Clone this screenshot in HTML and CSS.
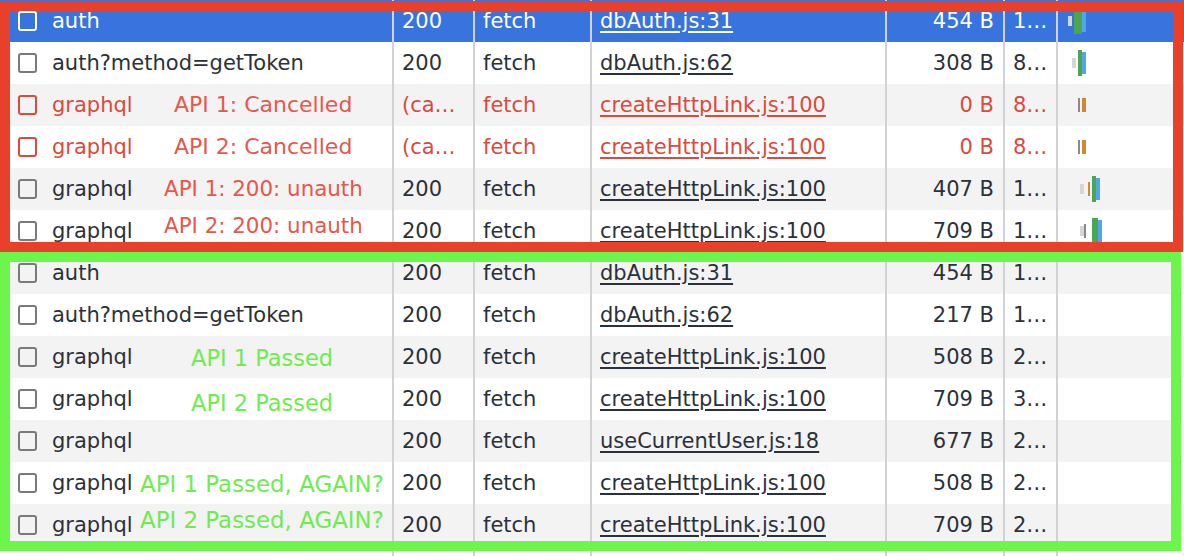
FILE: index.html
```html
<!DOCTYPE html>
<html lang="en">
<head>
    <meta charset="UTF-8">
    <title>Network - requests</title>
    <link rel="stylesheet" href="styles.css">
</head>
<body>
    <div class="shot">
        <div class="log">
            <div class="row selected">
                <div class="cell name"><span class="check"></span><span>auth</span></div>
                <div class="cell">200</div>
                <div class="cell">fetch</div>
                <div class="cell"><span class="link">dbAuth.js:31</span></div>
                <div class="cell size">454 B</div>
                <div class="cell time">1…</div>
                <div class="cell fall">
                    <span class="bar wait" style="left:10px;top:16px;width:4px;height:10px"></span>
                    <span class="bar green" style="left:16px;top:12px;width:8px;height:22px"></span>
                    <span class="bar blue" style="left:24px;top:12px;width:4px;height:20px"></span>
                </div>
            </div>
            <div class="row">
                <div class="cell name"><span class="check"></span><span>auth?method=getToken</span></div>
                <div class="cell">200</div>
                <div class="cell">fetch</div>
                <div class="cell"><span class="link">dbAuth.js:62</span></div>
                <div class="cell size">308 B</div>
                <div class="cell time">8…</div>
                <div class="cell fall">
                    <span class="bar wait" style="left:14px;top:16px;width:4px;height:10px"></span>
                    <span class="bar green" style="left:20px;top:8px;width:4px;height:26px"></span>
                    <span class="bar blue" style="left:24px;top:10px;width:4px;height:22px"></span>
                </div>
            </div>
            <div class="row error">
                <div class="cell name"><span class="check"></span><span>graphql</span></div>
                <div class="cell">(ca…</div>
                <div class="cell">fetch</div>
                <div class="cell"><span class="link">createHttpLink.js:100</span></div>
                <div class="cell size">0 B</div>
                <div class="cell time">8…</div>
                <div class="cell fall">
                    <span class="bar stall" style="left:20px;top:14px;width:2px;height:14px"></span>
                    <span class="bar orange" style="left:24px;top:14px;width:4px;height:14px"></span>
                </div>
            </div>
            <div class="row error">
                <div class="cell name"><span class="check"></span><span>graphql</span></div>
                <div class="cell">(ca…</div>
                <div class="cell">fetch</div>
                <div class="cell"><span class="link">createHttpLink.js:100</span></div>
                <div class="cell size">0 B</div>
                <div class="cell time">8…</div>
                <div class="cell fall">
                    <span class="bar stall" style="left:20px;top:14px;width:2px;height:14px"></span>
                    <span class="bar orange" style="left:24px;top:14px;width:4px;height:14px"></span>
                </div>
            </div>
            <div class="row">
                <div class="cell name"><span class="check"></span><span>graphql</span></div>
                <div class="cell">200</div>
                <div class="cell">fetch</div>
                <div class="cell"><span class="link">createHttpLink.js:100</span></div>
                <div class="cell size">407 B</div>
                <div class="cell time">1…</div>
                <div class="cell fall">
                    <span class="bar wait" style="left:22px;top:16px;width:4px;height:10px"></span>
                    <span class="bar orange" style="left:30px;top:14px;width:2px;height:14px"></span>
                    <span class="bar green" style="left:34px;top:8px;width:4px;height:26px"></span>
                    <span class="bar blue" style="left:38px;top:10px;width:4px;height:22px"></span>
                </div>
            </div>
            <div class="row">
                <div class="cell name"><span class="check"></span><span>graphql</span></div>
                <div class="cell">200</div>
                <div class="cell">fetch</div>
                <div class="cell"><span class="link">createHttpLink.js:100</span></div>
                <div class="cell size">709 B</div>
                <div class="cell time">1…</div>
                <div class="cell fall">
                    <span class="bar wait" style="left:22px;top:16px;width:4px;height:10px"></span>
                    <span class="bar stall" style="left:26px;top:14px;width:2px;height:14px"></span>
                    <span class="bar green" style="left:34px;top:8px;width:6px;height:26px"></span>
                    <span class="bar blue" style="left:40px;top:10px;width:4px;height:22px"></span>
                </div>
            </div>
            <div class="row">
                <div class="cell name"><span class="check"></span><span>auth</span></div>
                <div class="cell">200</div>
                <div class="cell">fetch</div>
                <div class="cell"><span class="link">dbAuth.js:31</span></div>
                <div class="cell size">454 B</div>
                <div class="cell time">1…</div>
                <div class="cell fall"></div>
            </div>
            <div class="row">
                <div class="cell name"><span class="check"></span><span>auth?method=getToken</span></div>
                <div class="cell">200</div>
                <div class="cell">fetch</div>
                <div class="cell"><span class="link">dbAuth.js:62</span></div>
                <div class="cell size">217 B</div>
                <div class="cell time">1…</div>
                <div class="cell fall"></div>
            </div>
            <div class="row">
                <div class="cell name"><span class="check"></span><span>graphql</span></div>
                <div class="cell">200</div>
                <div class="cell">fetch</div>
                <div class="cell"><span class="link">createHttpLink.js:100</span></div>
                <div class="cell size">508 B</div>
                <div class="cell time">2…</div>
                <div class="cell fall"></div>
            </div>
            <div class="row">
                <div class="cell name"><span class="check"></span><span>graphql</span></div>
                <div class="cell">200</div>
                <div class="cell">fetch</div>
                <div class="cell"><span class="link">createHttpLink.js:100</span></div>
                <div class="cell size">709 B</div>
                <div class="cell time">3…</div>
                <div class="cell fall"></div>
            </div>
            <div class="row">
                <div class="cell name"><span class="check"></span><span>graphql</span></div>
                <div class="cell">200</div>
                <div class="cell">fetch</div>
                <div class="cell"><span class="link">useCurrentUser.js:18</span></div>
                <div class="cell size">677 B</div>
                <div class="cell time">2…</div>
                <div class="cell fall"></div>
            </div>
            <div class="row">
                <div class="cell name"><span class="check"></span><span>graphql</span></div>
                <div class="cell">200</div>
                <div class="cell">fetch</div>
                <div class="cell"><span class="link">createHttpLink.js:100</span></div>
                <div class="cell size">508 B</div>
                <div class="cell time">2…</div>
                <div class="cell fall"></div>
            </div>
            <div class="row">
                <div class="cell name"><span class="check"></span><span>graphql</span></div>
                <div class="cell">200</div>
                <div class="cell">fetch</div>
                <div class="cell"><span class="link">createHttpLink.js:100</span></div>
                <div class="cell size">709 B</div>
                <div class="cell time">2…</div>
                <div class="cell fall"></div>
            </div>
            <div class="row">
                <div class="cell name"></div>
                <div class="cell"></div>
                <div class="cell"></div>
                <div class="cell"></div>
                <div class="cell size"></div>
                <div class="cell time"></div>
                <div class="cell fall"></div>
            </div>
        </div>

        <!-- annotations drawn over the screenshot -->
        <div class="box box-red"></div>
        <div class="box box-green"></div>

        <span class="note red n1">API 1: Cancelled</span>
        <span class="note red n2">API 2: Cancelled</span>
        <span class="note red n3">API 1: 200: unauth</span>
        <span class="note red n4">API 2: 200: unauth</span>
        <span class="note green n5">API 1 Passed</span>
        <span class="note green n6">API 2 Passed</span>
        <span class="note green n7">API 1 Passed, AGAIN?</span>
        <span class="note green n8">API 2 Passed, AGAIN?</span>
    </div>
</body>
</html>
```

FILE: styles.css
```css
body {
    margin: 0;
    padding: 0;
    background: #ffffff;
    font-family: "DejaVu Sans", "Liberation Sans", sans-serif;
    overflow: hidden;
}
.shot {
    position: relative;
    width: 1184px;
    height: 556px;
    overflow: hidden;
}
.log {
    display: flex;
    flex-direction: column;
}
.row {
    display: grid;
    grid-template-columns: 392px 81px 117px 295px 118px 53px 1fr;
    height: 42px;
    background: #ffffff;
    color: #2b313b;
    font-size: 21px;
    line-height: 41px;
}
.row:nth-child(odd) {
    background: #f3f3f3;
}
.row.selected {
    background: #3874de;
    color: #ffffff;
}
.row.error {
    color: #dc4a3b;
}
.cell {
    border-left: 2px solid #d1d1d6;
    padding: 1px 8px 0;
    white-space: nowrap;
    overflow: hidden;
}
.name {
    border-left: none;
    padding-left: 18px;
    display: flex;
    align-items: center;
    gap: 15px;
}
.check {
    flex: none;
    width: 19px;
    height: 20px;
    margin-top: -1px;
    box-sizing: border-box;
    border: 2px solid #7a7a7a;
    border-radius: 3px;
}
.selected .check {
    border-color: #ffffff;
}
.error .check {
    border-color: #dc4a3b;
}
.link {
    text-decoration: underline;
    text-underline-offset: 3px;
}
.size {
    text-align: right;
    padding-right: 9px;
}
.time {
    padding-right: 4px;
}
.fall {
    position: relative;
    padding: 0;
}
.bar {
    position: absolute;
}
.bar.wait {
    background: #d6d6d6;
}
.bar.stall {
    background: #8a8a8a;
}
.bar.green {
    background: #4ca651;
}
.bar.blue {
    background: #4ea7ee;
}
.bar.orange {
    background: #d08832;
}

/* overlay marks */
.box {
    position: absolute;
    left: 0;
    box-sizing: border-box;
    border: 10px solid;
}
.box-red {
    top: 1px;
    width: 1183px;
    height: 251px;
    border-color: #e8402a;
}
.box-green {
    top: 252px;
    width: 1181px;
    height: 299px;
    border-color: #6cf54a;
}
.note {
    position: absolute;
    font-size: 22px;
    line-height: 26px;
    white-space: nowrap;
}
.note.red {
    color: #e8574a;
}
.note.green {
    color: #6fec4f;
}
.n1 { left: 174px; top: 92px; }
.n2 { left: 174px; top: 134px; }
.n3 { left: 164px; top: 176px; font-size: 21.4px; }
.n4 { left: 164px; top: 213px; font-size: 21.4px; }
.n5 { left: 191px; top: 345px; font-size: 22.5px; }
.n6 { left: 191px; top: 390px; font-size: 22.5px; }
.n7 { left: 140px; top: 471px; font-size: 22.9px; }
.n8 { left: 140px; top: 507px; font-size: 22.9px; }
```
